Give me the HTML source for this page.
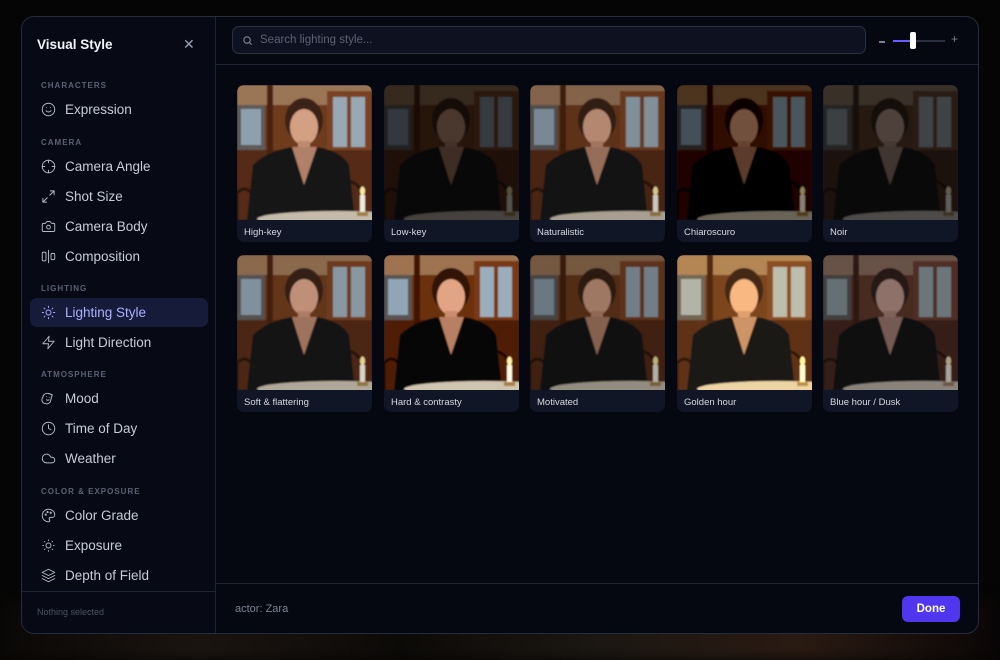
<!DOCTYPE html>
<html><head><meta charset="utf-8"><style>
*{box-sizing:border-box;margin:0;padding:0}
body{width:1000px;height:654px;overflow:hidden;background:#050505;font-family:"Liberation Sans",sans-serif;position:relative}
.bgglow{position:absolute;left:0;right:0;top:600px;height:60px;background:linear-gradient(90deg,#0a0806 0%,#1a1410 20%,#0c0a08 40%,#1b1712 60%,#2a1a12 80%,#0a0606 100%);filter:blur(6px)}
.modal{position:absolute;left:21px;top:16px;width:958px;height:618px;border:1px solid #262c3b;border-radius:13px;background:#050811;overflow:hidden}
.side{position:absolute;left:0;top:0;width:194px;height:100%;background:#070a15;border-right:1px solid #1e2433}
.title{position:absolute;left:15px;top:20px;color:#f1f3f8;font-weight:bold;font-size:13.5px}
.close{position:absolute;left:161px;top:19px;color:#9aa1b2;font-size:14px}
.sec{position:absolute;left:19px;font-size:8px;letter-spacing:1px;color:#5a6275;font-weight:bold}
.item{position:absolute;left:8px;width:178px;height:29px;border-radius:7px;color:#c8ccd6;font-size:13.5px;display:flex;align-items:center;padding-left:35px}
.item svg{position:absolute;left:11px;top:7px;width:15px;height:15px;fill:none;stroke:#b6bbc7;stroke-width:1.5;stroke-linecap:round;stroke-linejoin:round}
.item.act{background:#161b3a;color:#a9b0ff}
.item.act svg{stroke:#a9b0ff}
.sfoot{position:absolute;left:0;bottom:0;width:194px;height:42px;border-top:1px solid #1e2433}
.sfoot span{position:absolute;left:15px;top:15px;font-size:9px;color:#4b5264}
.top{position:absolute;left:194px;top:0;right:0;height:48px;border-bottom:1px solid #1e2433}
.search{position:absolute;left:16px;top:9px;width:634px;height:28px;border:1px solid #283044;border-radius:7px;background:#0e1220}
.search span{position:absolute;left:27px;top:7px;font-size:11.5px;color:#5b6274}
.search svg{position:absolute;left:9px;top:8px}
.foot{position:absolute;left:194px;right:0;bottom:0;height:50px;border-top:1px solid #1e2433}
.foot .a{position:absolute;left:19px;top:19px;font-size:11px;color:#7d8393}
.done{position:absolute;right:18px;top:12px;width:58px;height:26px;border-radius:6px;background:#5136f0;color:#fff;font-size:11.5px;text-align:center;line-height:26px;font-weight:bold}
.card{position:absolute;width:135px;height:157px;border-radius:7px;overflow:hidden;background:#111626}
.card svg{display:block}
.card span{position:absolute;left:7px;top:142px;font-size:9.5px;color:#d6d9e0}
</style></head><body>
<div class="bgglow"></div>
<svg width="0" height="0" style="position:absolute"><defs>
<filter id="bl"><feGaussianBlur stdDeviation="0.8"/></filter>
<symbol id="p" viewBox="0 0 135 135">
<g filter="url(#bl)">
<rect width="135" height="135" fill="#6e3a1a"/>
<rect x="0" y="0" width="135" height="20" fill="#9a7456"/>
<rect x="0" y="20" width="28" height="45" fill="#5e5a58"/>
<rect x="4" y="24" width="20" height="36" fill="#8ea0ae"/>
<rect x="90" y="6" width="45" height="62" fill="#7a4220"/>
<rect x="96" y="12" width="14" height="50" fill="#98a8b4"/>
<rect x="114" y="12" width="14" height="50" fill="#98a8b4"/>
<rect x="0" y="65" width="135" height="70" fill="#552a12"/>
<rect x="30" y="0" width="6" height="135" fill="#4a240e"/>
<path d="M100 135 V105 Q112 88 124 105 V135" stroke="#2b1508" stroke-width="3" fill="none"/>
<path d="M0 135 V108 Q8 100 14 108" stroke="#2b1508" stroke-width="3" fill="none"/>
<ellipse cx="67" cy="35" rx="19" ry="22" fill="#3a2014"/>
<ellipse cx="67" cy="42" rx="14" ry="18" fill="#d4a084"/>
<rect x="61" y="56" width="12" height="14" fill="#c08a70"/>
<path d="M10 135 L16 80 Q30 66 55 62 L67 100 L80 62 Q104 66 112 80 L118 135Z" fill="#131417"/>
<path d="M55 62 L67 100 L80 62Z" fill="#b08068"/>
<ellipse cx="100" cy="134" rx="80" ry="8" fill="#c4bbaa"/>
<rect x="123" y="110" width="5" height="18" fill="#f3ead8"/>
<ellipse cx="125.5" cy="106" rx="2.5" ry="4.5" fill="#ffe9a8"/>
<rect x="120" y="127" width="11" height="4" fill="#a0804a"/>
</g>
</symbol></defs></svg>
<div class="modal">
<div class="side">
<div class="title">Visual Style</div>
<div class="close">✕</div>
<div class="sec" style="top:64px">CHARACTERS</div>
<div class="item" style="top:78px"><svg viewBox="0 0 24 24"><circle cx="12" cy="12" r="10"/><path d="M8 14s1.5 2 4 2 4-2 4-2"/><path d="M9 9h.01M15 9h.01"/></svg>Expression</div>
<div class="sec" style="top:121px">CAMERA</div>
<div class="item" style="top:135px"><svg viewBox="0 0 24 24"><circle cx="12" cy="12" r="10"/><path d="M22 12h-4M6 12H2M12 6V2M12 22v-4"/></svg>Camera Angle</div>
<div class="item" style="top:165px"><svg viewBox="0 0 24 24"><path d="M15 3h6v6M9 21H3v-6M21 3l-7 7M3 21l7-7"/></svg>Shot Size</div>
<div class="item" style="top:195px"><svg viewBox="0 0 24 24"><path d="M14.5 4h-5L7 7H4a2 2 0 0 0-2 2v9a2 2 0 0 0 2 2h16a2 2 0 0 0 2-2V9a2 2 0 0 0-2-2h-3z"/><circle cx="12" cy="13" r="3"/></svg>Camera Body</div>
<div class="item" style="top:225px"><svg viewBox="0 0 24 24"><rect x="2" y="5" width="6" height="14" rx="2"/><rect x="16" y="7" width="6" height="10" rx="2"/><path d="M12 2v20"/></svg>Composition</div>
<div class="sec" style="top:267px">LIGHTING</div>
<div class="item act" style="top:281px"><svg viewBox="0 0 24 24"><circle cx="12" cy="12" r="4"/><path d="M12 2v2M12 20v2M4.9 4.9l1.4 1.4M17.7 17.7l1.4 1.4M2 12h2M20 12h2M6.3 17.7l-1.4 1.4M19.1 4.9l-1.4 1.4"/></svg>Lighting Style</div>
<div class="item" style="top:311px"><svg viewBox="0 0 24 24"><path d="M13 2L3 14h9l-1 8 10-12h-9l1-8z"/></svg>Light Direction</div>
<div class="sec" style="top:353px">ATMOSPHERE</div>
<div class="item" style="top:367px"><svg viewBox="0 0 24 24"><path d="M3 10a7 7 0 0 1 9-6l6 2-3 11a6 6 0 0 1-8 3 6 6 0 0 1-4-10z"/><path d="M9 9h.01M14 10h.01M9 14c1 1 3 1 4 0"/></svg>Mood</div>
<div class="item" style="top:397px"><svg viewBox="0 0 24 24"><circle cx="12" cy="12" r="10"/><path d="M12 6v6l4 2"/></svg>Time of Day</div>
<div class="item" style="top:427px"><svg viewBox="0 0 24 24"><path d="M17.5 19H9a7 7 0 1 1 6.7-9h1.8a4.5 4.5 0 1 1 0 9z"/></svg>Weather</div>
<div class="sec" style="top:470px">COLOR &amp; EXPOSURE</div>
<div class="item" style="top:484px"><svg viewBox="0 0 24 24"><path d="M12 2a10 10 0 0 0 0 20c1.5 0 2-1 2-2 0-1.5-1-1.5-1-3s1-2 2.5-2H18a4 4 0 0 0 4-4c0-5-4.5-9-10-9z"/><circle cx="7.5" cy="10.5" r="1"/><circle cx="10.5" cy="6.5" r="1"/><circle cx="15.5" cy="7.5" r="1"/></svg>Color Grade</div>
<div class="item" style="top:514px"><svg viewBox="0 0 24 24"><circle cx="12" cy="12" r="4"/><path d="M12 3v1M12 20v1M3 12h1M20 12h1M5.6 5.6l.7.7M17.7 17.7l.7.7M5.6 18.4l.7-.7M17.7 6.3l.7-.7"/></svg>Exposure</div>
<div class="item" style="top:544px"><svg viewBox="0 0 24 24"><path d="M12 2L2 7l10 5 10-5-10-5z"/><path d="M2 12l10 5 10-5M2 17l10 5 10-5"/></svg>Depth of Field</div>
<div class="sfoot"><span>Nothing selected</span></div>
</div>
<div class="top">
<div class="search"><svg width="11" height="11" viewBox="0 0 24 24" fill="none" stroke="#7a8194" stroke-width="2.5"><circle cx="11" cy="11" r="7"/><path d="M21 21l-4.5-4.5"/></svg><span>Search lighting style...</span></div>
<div style="position:absolute;left:663px;top:24px;width:6px;height:1.5px;background:#7a8194"></div>
<div style="position:absolute;left:677px;top:23px;width:52px;height:2px;background:#2a3040"></div>
<div style="position:absolute;left:677px;top:23px;width:20px;height:2px;background:#6a5cff"></div>
<div style="position:absolute;left:694px;top:15px;width:6px;height:17px;background:#fff;border-radius:2px"></div>
<div style="position:absolute;left:735px;top:15px;color:#7a8194;font-size:12px">+</div>
</div>
<div class="card" style="left:215px;top:68px"><svg width="135" height="135"><use href="#p"/></svg><span>High-key</span></div>
<div class="card" style="left:362px;top:68px"><svg width="135" height="135" style="filter:brightness(.35)"><use href="#p"/></svg><span>Low-key</span></div>
<div class="card" style="left:508px;top:68px"><svg width="135" height="135" style="filter:brightness(.85)"><use href="#p"/></svg><span>Naturalistic</span></div>
<div class="card" style="left:655px;top:68px"><svg width="135" height="135" style="filter:brightness(.55) contrast(1.2)"><use href="#p"/></svg><span>Chiaroscuro</span></div>
<div class="card" style="left:801px;top:68px"><svg width="135" height="135" style="filter:brightness(.4) saturate(.6)"><use href="#p"/></svg><span>Noir</span></div>
<div class="card" style="left:215px;top:238px"><svg width="135" height="135" style="filter:brightness(.9)"><use href="#p"/></svg><span>Soft &amp; flattering</span></div>
<div class="card" style="left:362px;top:238px"><svg width="135" height="135" style="filter:contrast(1.15)"><use href="#p"/></svg><span>Hard &amp; contrasty</span></div>
<div class="card" style="left:508px;top:238px"><svg width="135" height="135" style="filter:brightness(.75)"><use href="#p"/></svg><span>Motivated</span></div>
<div class="card" style="left:655px;top:238px"><svg width="135" height="135" style="filter:sepia(.4) saturate(1.5) brightness(1.05)"><use href="#p"/></svg><span>Golden hour</span></div>
<div class="card" style="left:801px;top:238px"><svg width="135" height="135" style="filter:hue-rotate(-10deg) saturate(.7) brightness(.7)"><use href="#p"/></svg><span>Blue hour / Dusk</span></div>
<div class="foot"><span class="a">actor: Zara</span><div class="done">Done</div></div>
</div>
</body></html>
